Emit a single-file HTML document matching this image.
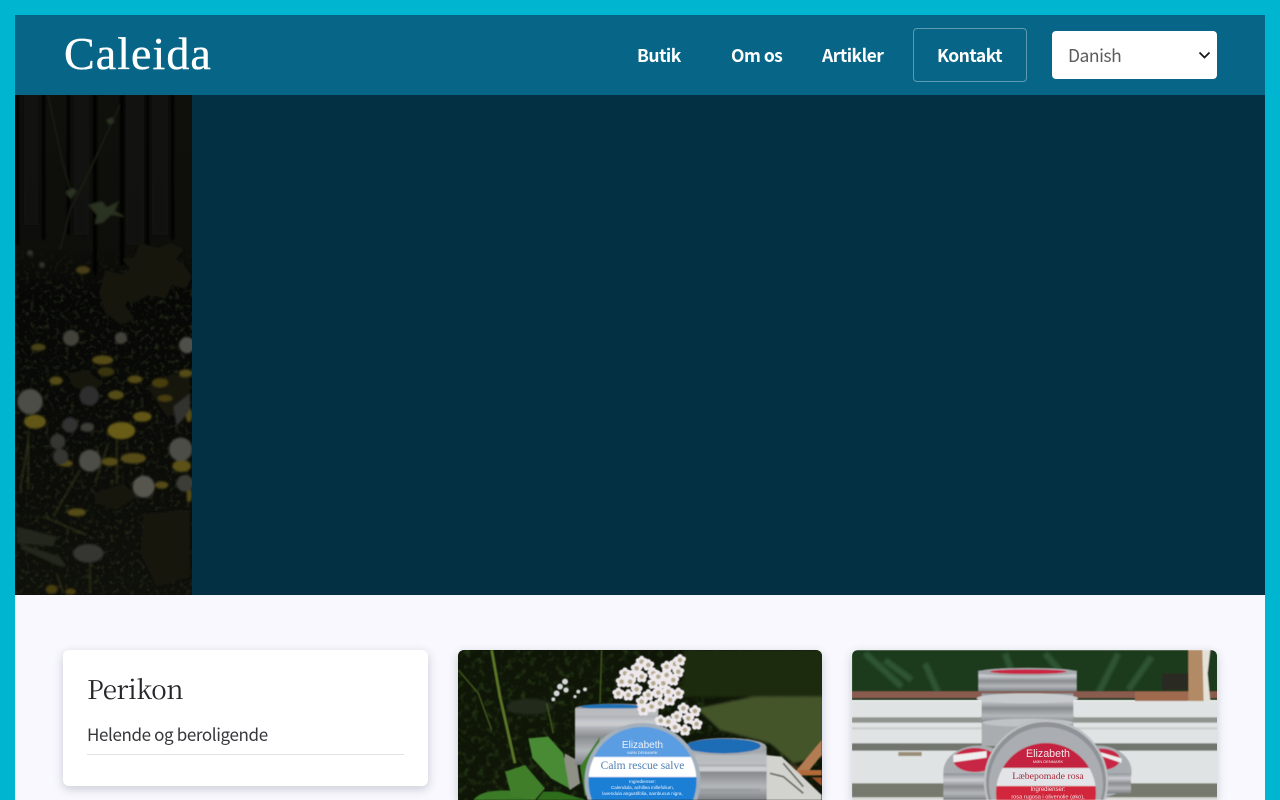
<!DOCTYPE html>
<html lang="da"><head><meta charset="utf-8"><title>Caleida</title>
<style>
html,body{margin:0;padding:0;width:1280px;height:800px;overflow:hidden;background:#00b5d0}
*{box-sizing:border-box}
#root{position:absolute;left:0;top:0;width:1280px;height:800px;overflow:hidden;background:#00b5d0}
#page{position:absolute;left:15px;top:15px;width:1250px;height:785px;background:#f8f8fe;overflow:hidden}
#hdr{position:absolute;left:15px;top:15px;width:1250px;height:80px;background:#076687}
#hero{position:absolute;left:15px;top:95px;width:1250px;height:500px;background:#033042}
.nav{position:absolute;top:44px;color:#fff;font:700 17.5px/24px "Noto Sans CJK JP","Liberation Sans",sans-serif;letter-spacing:-.5px;white-space:nowrap}
#logo{position:absolute;left:64px;top:26px;color:#fff;font:46px/56px "Liberation Serif",serif;letter-spacing:1.05px;-webkit-text-stroke:.35px #fff;white-space:nowrap}
#btn{position:absolute;left:913px;top:28px;width:114px;height:54px;border:1px solid rgba(255,255,255,.35);border-radius:4px}
#sel{position:absolute;left:1052px;top:31px;width:165px;height:48px;background:#fff;border-radius:4px}
#sel span{position:absolute;left:16px;top:13px;color:#5c5c5c;font:17.5px/24px "Noto Sans CJK JP","Liberation Sans",sans-serif;letter-spacing:-.5px}
.card{position:absolute;top:650px;height:150px;background:#fff;border-radius:6px 6px 0 0;box-shadow:0 3px 10px rgba(40,40,70,.22);overflow:hidden}
#c1{left:63px;width:365px;height:136px;border-radius:6px}
#c1 h2{position:absolute;left:24px;top:20px;margin:0;font:400 26px/38px "Noto Serif CJK SC","Liberation Serif",serif;letter-spacing:-.4px;color:#25262a;white-space:nowrap}
#c1 p{position:absolute;left:24px;top:72px;margin:0;font:400 17px/24px "Noto Sans CJK JP","Liberation Sans",sans-serif;letter-spacing:-.38px;color:#37383c;white-space:nowrap}
#c1 i{position:absolute;left:24px;top:104px;width:317px;height:1px;background:#e2e2e6}
svg{display:block;position:absolute}
</style></head><body>
<div id="root">
<div id="page"></div>
<div id="hdr"></div>
<div id="logo">Caleida</div>
<div class="nav" style="left:637px">Butik</div>
<div class="nav" style="left:731px">Om os</div>
<div class="nav" style="left:822px">Artikler</div>
<div id="btn"></div>
<div class="nav" style="left:937px">Kontakt</div>
<div id="sel"><span>Danish</span>
<svg style="left:146px;top:20px" width="13" height="9" viewBox="0 0 13 9"><path d="M1.5 1.5L6.5 6.5L11.5 1.5" fill="none" stroke="#1b1b1b" stroke-width="1.8"/></svg></div>
<div id="hero"></div>

<svg style="left:15px;top:95px" width="177" height="500" viewBox="15 95 177 500">
<defs>
<filter id="b1" x="-5%" y="-5%" width="110%" height="110%"><feGaussianBlur stdDeviation="0.6"/></filter>
<filter id="b15" x="-5%" y="-5%" width="110%" height="110%"><feGaussianBlur stdDeviation="1.1"/></filter>
<filter id="b4" x="-10%" y="-10%" width="120%" height="120%"><feGaussianBlur stdDeviation="4"/></filter>
<filter id="nz" x="0" y="0" width="100%" height="100%" color-interpolation-filters="sRGB"><feTurbulence type="fractalNoise" baseFrequency=".2" numOctaves="2" seed="4"/><feColorMatrix values="0 0 0 0 .15  0 0 0 0 .17  0 0 0 0 .1  3 0 0 0 -1.5"/></filter>
<linearGradient id="hg" x1="0" y1="0" x2="0" y2="1"><stop offset="0" stop-color="#0f0f0b"/><stop offset=".3" stop-color="#0e0e0a"/><stop offset=".4" stop-color="#070806"/><stop offset=".6" stop-color="#090a07"/><stop offset="1" stop-color="#0f100b"/></linearGradient>
<linearGradient id="fd" x1="0" y1="0" x2="0" y2="1"><stop offset="0" stop-color="#fff" stop-opacity="0"/><stop offset=".15" stop-color="#fff"/><stop offset="1" stop-color="#fff"/></linearGradient>
<mask id="mf"><rect x="15" y="235" width="177" height="360" fill="url(#fd)"/></mask>
</defs>
<rect x="15" y="95" width="177" height="500" fill="url(#hg)"/>
<g mask="url(#mf)"><rect x="15" y="235" width="177" height="360" filter="url(#nz)" opacity=".75"/></g>
<g filter="url(#b15)">
<g fill="#040403"><rect x="15" y="95" width="4" height="150"/><rect x="42" y="95" width="3" height="145"/><rect x="67" y="95" width="3" height="140"/><rect x="93" y="95" width="4" height="180"/><rect x="120" y="95" width="4" height="170"/><rect x="146" y="95" width="3" height="150"/><rect x="171" y="95" width="3" height="145"/></g>
<g fill="#161510" opacity=".55"><rect x="24" y="95" width="14" height="130"/><rect x="74" y="95" width="15" height="140"/><rect x="126" y="95" width="18" height="150"/><rect x="152" y="95" width="16" height="140"/></g>
<path d="M120 105L90 170L70 210L60 250M48 95L62 160L70 190" fill="none" stroke="#22261a" stroke-width="1"/>
<g fill="#293020"><path d="M88 205l14-4 5 6 12-6-4 10 10 6-14-2-8 8-8 1 2-9z"/><path d="M65 192l8-4 4 3-6 8z"/><path d="M106 120l6-3 3 5-6 3z"/></g>
<g fill="#12160e">
<path d="M140 243l18 5 12-5 14 6-8 10 10 8 6 10-6 12-14-4-6 14-16-4-16 8-12-4-6 12-10-4-4-14 12-8-6-10 12 0 10-6-8-10 12-2z"/>
<path d="M105 270l20 5-6 10 14 8-8 12 10 14-14 6-16-12-6-20z"/>
</g>
<ellipse cx="83" cy="270" rx="7" ry="4" fill="#463e12"/><ellipse cx="30" cy="253" rx="3" ry="3" fill="#33302a"/><ellipse cx="42" cy="265" rx="3" ry="3" fill="#33302a"/>
<g fill="#42423b"><circle cx="71" cy="338" r="8"/><circle cx="121" cy="338" r="6"/><circle cx="187" cy="345" r="8" fill="#50504a"/></g>
<g transform="translate(0 340) scale(.3333)">
<g fill="#14180f">
<path d="M200 100l60-10 50 40-40 30-50-20z"/><path d="M440 140l80-40 50 20v100l-70 10z"/>
<path d="M280 460l90-30 40 40-60 40-60-20z"/><path d="M430 520l140-10v200l-100 30-50-100z"/>
<path d="M50 560l120 30-10 30-110-10z" fill="#23271a"/><path d="M60 610l120 40 20 30-20 0-110-50z" fill="#23271a"/>
</g>
<path d="M85 270v180M85 300L60 450M240 390L160 530M350 300v130M325 310l-40 120M130 530L260 585M270 660v100M170 700l20 60" stroke="#33371f" stroke-width="4" fill="none"/>
<g fill="#544b13">
<ellipse cx="115" cy="22" rx="22" ry="11" fill="#4a4212"/><ellipse cx="308" cy="60" rx="32" ry="14"/><ellipse cx="318" cy="95" rx="25" ry="14" fill="#38340f"/><ellipse cx="168" cy="122" rx="20" ry="13"/><ellipse cx="405" cy="118" rx="22" ry="12"/><ellipse cx="480" cy="128" rx="24" ry="14" fill="#463e11"/><ellipse cx="557" cy="100" rx="20" ry="12"/><ellipse cx="348" cy="165" rx="24" ry="14"/><ellipse cx="495" cy="175" rx="22" ry="10" fill="#463e11"/>
<ellipse cx="105" cy="245" rx="33" ry="21" fill="#625713"/><ellipse cx="427" cy="230" rx="28" ry="15" fill="#625713"/><ellipse cx="364" cy="272" rx="42" ry="26" fill="#675c15"/><ellipse cx="400" cy="355" rx="38" ry="16"/><ellipse cx="197" cy="370" rx="22" ry="10"/><ellipse cx="330" cy="365" rx="24" ry="13"/><ellipse cx="545" cy="378" rx="28" ry="18" fill="#5b5114"/><ellipse cx="485" cy="435" rx="20" ry="11"/><ellipse cx="230" cy="517" rx="28" ry="12"/><ellipse cx="155" cy="748" rx="18" ry="14" fill="#463e11"/><ellipse cx="212" cy="755" rx="16" ry="10" fill="#463e11"/><ellipse cx="567" cy="225" rx="10" ry="22"/><ellipse cx="568" cy="465" rx="8" ry="22"/>
</g>
<g>
<circle cx="90" cy="185" r="38" fill="#4d4d46"/><circle cx="268" cy="168" r="29" fill="#2e2e2e"/><circle cx="210" cy="255" r="23" fill="#333331"/><circle cx="173" cy="305" r="23" fill="#363633"/><circle cx="182" cy="350" r="23" fill="#363633"/><circle cx="270" cy="362" r="33" fill="#4d4d47"/><circle cx="431" cy="440" r="33" fill="#565650"/><circle cx="542" cy="328" r="35" fill="#4d4d47"/><ellipse cx="265" cy="640" rx="46" ry="28" fill="#343430"/><circle cx="560" cy="20" r="20" fill="#50504a"/><circle cx="555" cy="430" r="25" fill="#3e3e38"/><ellipse cx="262" cy="262" rx="20" ry="14" fill="#3e3e38"/>
</g>
<path d="M520 200l50-40v50l-40 50z" fill="#33332e"/>
</g>
</g>
</svg>

<div id="c1" class="card"><h2>Perikon</h2><p>Helende og beroligende</p><i></i></div>

<div class="card" style="left:458px;width:364px">
<svg style="left:-458px;top:-650px" width="1280" height="800" viewBox="0 0 1280 800">
<defs>
<linearGradient id="tin" x1="0" y1="0" x2="0" y2="1"><stop offset="0" stop-color="#8f949a"/><stop offset=".25" stop-color="#c9ccd0"/><stop offset=".5" stop-color="#8a8d90"/><stop offset=".75" stop-color="#b4b7ba"/><stop offset="1" stop-color="#7d8084"/></linearGradient>
<g id="fl"><g fill="#efe9ee"><circle cx="0" cy="-10" r="8"/><circle cx="10" cy="-3" r="8"/><circle cx="6" cy="9" r="8"/><circle cx="-6" cy="9" r="8"/><circle cx="-10" cy="-3" r="8"/></g><circle r="7" fill="#b3aa8c"/></g>
<filter id="nz2" x="0" y="0" width="100%" height="100%" color-interpolation-filters="sRGB"><feTurbulence type="fractalNoise" baseFrequency=".14" numOctaves="2" seed="9"/><feColorMatrix values="0 0 0 0 .16  0 0 0 0 .24  0 0 0 0 .09  3 0 0 0 -1.5"/></filter>
</defs>
<rect x="458" y="650" width="364" height="150" fill="#0f1608"/>
<rect x="458" y="650" width="364" height="150" filter="url(#nz2)" opacity=".75"/>
<g filter="url(#b4)" transform="translate(450 640) scale(.3333)">
<rect x="700" y="30" width="420" height="140" fill="#1a2c10"/>
<path d="M740 205l170-35 210 0v180l-90 20-70-60-150-40z" fill="#45542c"/>
<path d="M870 330l90 20 90 30-20 40-120-40z" fill="#44361f"/>
<ellipse cx="240" cy="200" rx="70" ry="24" fill="#242a1e"/>
</g>
<g filter="url(#b1)">
<g transform="translate(450 640) scale(.3333)">
<path d="M125 30l25 140 45 200" stroke="#5a7426" stroke-width="9" fill="none"/><path d="M455 30l-5 160M290 190l20 90M25 90l60 70 40 110" stroke="#3c531c" stroke-width="5" fill="none"/>
<g fill="#d6d8d8"><circle cx="330" cy="140" r="9"/><circle cx="345" cy="125" r="9"/><circle cx="320" cy="160" r="9"/><circle cx="348" cy="150" r="8"/><circle cx="310" cy="178" r="6"/><circle cx="385" cy="155" r="6"/><circle cx="405" cy="148" r="6"/><circle cx="375" cy="170" r="5"/></g>
<path d="M345 340l35 20 10 70-30 20-25-40z" fill="#8f9186"/>
<path d="M1040 390l75-90v45l-40 50z" fill="#b47c52"/><path d="M1040 390h75v16h-75z" fill="#b26a38"/><path d="M1085 412h30v26z" fill="#994f25"/>
<path d="M945 345l50 5 120 115v15H930z" fill="#d2d3ce"/><path d="M960 400l40 10 60 50M1000 370l60 70" stroke="#68685f" stroke-width="5" fill="none"/>
</g>
<g transform="translate(450 640) scale(.3333)">
<rect x="375" y="205" width="250" height="170" fill="url(#tin)"/><ellipse cx="500" cy="205" rx="125" ry="14" fill="#8d9294"/><ellipse cx="480" cy="200" rx="88" ry="8" fill="#1d71b8"/>
<rect x="375" y="205" width="250" height="22" fill="#b9bbbe"/><rect x="375" y="246" width="250" height="12" fill="#c8cacc"/>
<rect x="705" y="320" width="245" height="160" fill="url(#tin)"/><ellipse cx="827" cy="320" rx="122" ry="26" fill="#a2a7ac"/><ellipse cx="820" cy="318" rx="112" ry="22" fill="#1c6cb6"/>
<rect x="740" y="346" width="210" height="20" fill="#b9bcbf"/><rect x="740" y="380" width="210" height="14" fill="#cbcdcf"/><rect x="750" y="446" width="180" height="14" fill="#9b9fa3"/>
<path d="M70 480c20-25 60-30 110-28l80 28z" fill="#3a7a25"/><path d="M165 395l60-20 60 70-30 35-70-10z" fill="#3f7e2c"/><path d="M235 295l60-5 45 50 18 105-55-30-55-60z" fill="#4a8b34"/><path d="M390 380l60-90-15 130-30 50z" fill="#3c7c27"/>
<path d="M280 455l45 0 85 25H260z" fill="#2f6d1f"/>
</g>
<g transform="translate(570 650) scale(.3333)">
<use href="#fl" x="215" y="35"/><use href="#fl" x="235" y="45"/><use href="#fl" x="200" y="55"/><use href="#fl" x="165" y="70"/><use href="#fl" x="185" y="78"/><use href="#fl" x="155" y="95"/><use href="#fl" x="180" y="95"/><use href="#fl" x="215" y="80"/><use href="#fl" x="250" y="70"/><use href="#fl" x="265" y="80"/><use href="#fl" x="290" y="50"/><use href="#fl" x="315" y="42"/><use href="#fl" x="330" y="30"/><use href="#fl" x="325" y="65"/><use href="#fl" x="290" y="75"/><use href="#fl" x="310" y="90"/><use href="#fl" x="280" y="100"/><use href="#fl" x="250" y="100"/><use href="#fl" x="200" y="118"/><use href="#fl" x="175" y="135"/><use href="#fl" x="145" y="130"/><use href="#fl" x="235" y="135"/><use href="#fl" x="265" y="128"/><use href="#fl" x="295" y="125"/><use href="#fl" x="325" y="130"/><use href="#fl" x="215" y="155"/><use href="#fl" x="245" y="170"/><use href="#fl" x="270" y="160"/><use href="#fl" x="300" y="150"/><use href="#fl" x="220" y="180"/><use href="#fl" x="340" y="175"/><use href="#fl" x="375" y="183"/><use href="#fl" x="355" y="205"/><use href="#fl" x="320" y="200"/><use href="#fl" x="295" y="215"/><use href="#fl" x="272" y="212"/><use href="#fl" x="380" y="222"/><use href="#fl" x="345" y="240"/><use href="#fl" x="315" y="232"/>
</g>
<path d="M587.7 800A58 58 0 1 1 697.3 800Z" fill="#a3afba"/><path d="M592 800A54 54 0 1 1 693 800Z" fill="#5a9de2"/>
<clipPath id="cl2"><path d="M592 800A54 54 0 1 1 693 800Z"/></clipPath>
<g clip-path="url(#cl2)"><rect x="585" y="757" width="115" height="20" fill="#fff"/><rect x="585" y="777" width="115" height="23" fill="#1a7fd6"/></g>
</g>
<g style="font-family:'Liberation Sans',sans-serif" fill="#eaf2fb" text-anchor="middle">
<text x="642.5" y="748" font-size="10">Elizabeth</text>
<text x="642.5" y="754" font-size="4">MØN DENMARK</text>
<text x="642.5" y="769" font-size="11.5" fill="#4f80b4" style="font-family:'Liberation Serif',serif">Calm rescue salve</text>
<text x="642.5" y="783" font-size="4.6">Ingredienser:</text>
<text x="642.5" y="789" font-size="4.6">Calendula, achillea millefolium,</text>
<text x="642.5" y="795" font-size="4.6">lavendula angustifolia, sambucus nigra,</text>
</g>
</svg>
</div>

<div class="card" style="left:852px;width:365px">
<svg style="left:-852px;top:-650px" width="1280" height="800" viewBox="0 0 1280 800">
<g filter="url(#b1)">
<g transform="translate(845 640) scale(.3333)">
<rect x="20" y="30" width="1100" height="150" fill="#1b3a1d"/>
<g filter="url(#b4)"><path d="M60 40l110 100M240 70l40 90M480 40l40 110M760 160l60-120M850 150l70-100M120 60l80 60M600 40l60 70" stroke="#3a663e" stroke-width="20" fill="none" opacity=".6"/></g>
<rect x="20" y="154" width="1100" height="20" fill="#8a5c50"/><rect x="870" y="155" width="160" height="28" fill="#a06a50"/>
<path d="M1030 30h55l-10 60 5 95h-50z" fill="#b28a66"/><path d="M1072 30h24l-8 70 8 85h-20z" fill="#e4e2d8"/>
<rect x="950" y="100" width="80" height="50" fill="#2c2a20"/>
<rect x="20" y="183" width="1100" height="297" fill="#dfe3e3"/>
<rect x="20" y="232" width="1100" height="16" fill="#8f948e"/><rect x="20" y="310" width="1100" height="22" fill="#6f746d"/><rect x="20" y="430" width="1100" height="42" fill="#767a6e"/>
<rect x="20" y="262" width="1100" height="6" fill="#c8cecb"/><rect x="160" y="336" width="70" height="12" fill="#9a8e76"/><rect x="20" y="474" width="1100" height="6" fill="#d4d6d2"/>
<rect x="410" y="228" width="275" height="90" fill="#a9adb0"/><ellipse cx="548" cy="232" rx="140" ry="18" fill="#9c9fa3"/>
<rect x="410" y="160" width="275" height="90" fill="url(#tin)"/><ellipse cx="548" cy="248" rx="137" ry="12" fill="#bfc3c6"/>
<ellipse cx="547" cy="175" rx="152" ry="15" fill="#c8cbcd"/>
<rect x="400" y="92" width="295" height="62" fill="url(#tin)"/><ellipse cx="548" cy="96" rx="148" ry="12" fill="#a6a9ac"/><ellipse cx="550" cy="95" rx="115" ry="7" fill="#c92844"/>
<ellipse cx="400" cy="395" rx="105" ry="78" fill="#a9adb1"/><ellipse cx="390" cy="360" rx="65" ry="36" fill="#c82645"/><rect x="295" y="400" width="130" height="80" fill="url(#tin)"/><path d="M325 345l100-12v20l-100 14z" fill="#eee"/>
<ellipse cx="760" cy="395" rx="100" ry="78" fill="#a9adb1"/><ellipse cx="770" cy="358" rx="55" ry="32" fill="#c82645"/><rect x="730" y="400" width="128" height="60" fill="url(#tin)"/><path d="M760 335l70 20v14l-70-24z" fill="#eee"/>
</g>
<path d="M986.7 800A62 62 0 1 1 1105.3 800Z" fill="#8f9296"/><path d="M991.3 800A57 57 0 1 1 1100.7 800Z" fill="#aaadb1"/><path d="M987.7 800A61 61 0 1 1 1104.3 800" fill="none" stroke="#c0c3c6" stroke-width="2"/>
<clipPath id="cl3"><circle cx="1046" cy="793" r="50"/></clipPath>
<g clip-path="url(#cl3)"><rect x="990" y="740" width="112" height="28" fill="#c3203f"/><rect x="990" y="768" width="112" height="18" fill="#e2e4e7"/><rect x="990" y="786" width="112" height="14" fill="#d1263a"/></g>
</g>
<g style="font-family:'Liberation Sans',sans-serif" fill="#f6e6ea" text-anchor="middle">
<text x="1048" y="757" font-size="10.7">Elizabeth</text>
<text x="1048" y="763" font-size="4">MØN DENMARK</text>
<text x="1048" y="779" font-size="9.8" fill="#a62a3c" style="font-family:'Liberation Serif',serif">Læbepomade rosa</text>
<text x="1048" y="791" font-size="6">Ingredienser:</text>
<text x="1048" y="798.5" font-size="5.6">rosa rugosa i olivenolie (øko),</text>
</g>
</svg>
</div>
</div>
</body></html>
